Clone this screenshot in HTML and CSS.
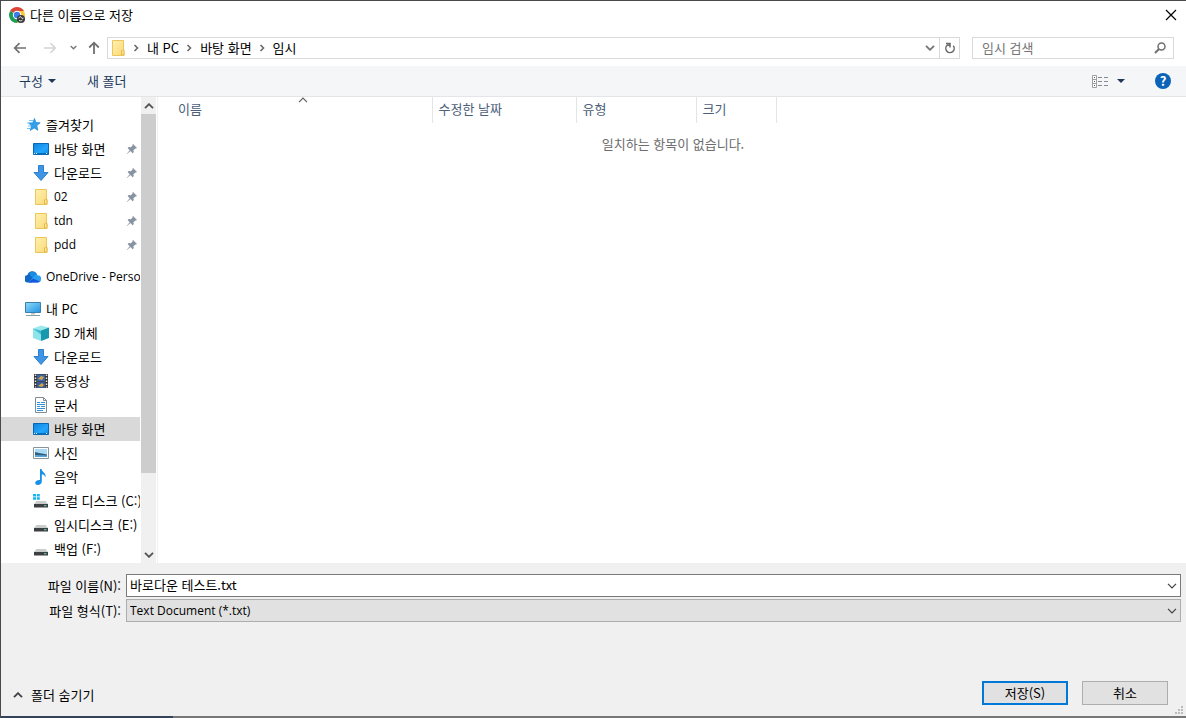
FILE: index.html
```html
<!DOCTYPE html>
<html lang="ko">
<head>
    <meta charset="UTF-8">
    <title>다른 이름으로 저장</title>
    <link rel="stylesheet" href="styles.css">
</head>
<body>
    <svg class="defs" aria-hidden="true">
        <linearGradient id="blueScreen" x1="0" y1="0" x2="1" y2="1">
            <stop offset="0" stop-color="#0b84e0"/><stop offset=".6" stop-color="#25a5fb"/><stop offset="1" stop-color="#0c8ceb"/>
        </linearGradient>
        <linearGradient id="pcScreen" x1="0" y1="0" x2="1" y2="1">
            <stop offset="0" stop-color="#8fdcfb"/><stop offset="1" stop-color="#2392e0"/>
        </linearGradient>
        <linearGradient id="folderFill" x1="0" y1="0" x2="1" y2="1">
            <stop offset="0" stop-color="#fff0b0"/><stop offset="1" stop-color="#fbd976"/>
        </linearGradient>
        <symbol id="folder" viewBox="0 0 16 16">
            <path d="M2.500.5h11v10l.5.5v4.500H2.500z" fill="url(#folderFill)" stroke="#ecc65d"/>
            <path d="M11.500 15v-4l1-1h1.500v5z" fill="#fde390" stroke="#e6b94a"/>
        </symbol>
        <symbol id="desktop" viewBox="0 0 16 16">
            <path d="M.5 2.500h15v11H.500z" fill="url(#blueScreen)" stroke="#0669b5"/>
            <path d="M1 12.500h14" stroke="#0a70bd"/>
            <path d="M1 12.500h1M3 12.500h1M13 12.500h1" stroke="#d5efff"/>
        </symbol>
        <symbol id="download" viewBox="0 0 16 16">
            <path d="M5.500.5h5v7h4.500L8 15.500 1 7.500h4.500z" fill="#3e95e3" stroke="#2d7fcb"/>
        </symbol>
        <symbol id="pin" viewBox="0 0 12 12">
            <path d="M7 1l4 4-1 .6-.7-.2-1.800 1.800.2 2-1 1L4.500 8 1 11 .8 10.700 3.700 7.200 1.600 5l1-1 2.200.2L6.600 2.600 6.400 1.700z" fill="#8793a0"/>
        </symbol>
        <symbol id="drive" viewBox="0 0 16 16">
            <path d="M3.500 8h9L15 11H1z" fill="#c9cccd"/>
            <path d="M1 11h14v3.500H1z" fill="#3b3f41"/>
            <path d="M11 12.700h2.500" stroke="#5fe39b"/>
        </symbol>
        <symbol id="chevronRight" viewBox="0 0 6 8">
            <path d="M1.500 1l3 3-3 3" fill="none" stroke="#6a6a6a" stroke-width="1.600"/>
        </symbol>
        <symbol id="chevronDown" viewBox="0 0 10 6">
            <path d="M1 .8l4 4 4-4" fill="none" stroke="currentColor" stroke-width="1.200"/>
        </symbol>
        <symbol id="chevronUp" viewBox="0 0 10 6">
            <path d="M1 5.200l4-4 4 4" fill="none" stroke="currentColor" stroke-width="1.200"/>
        </symbol>
        <symbol id="triangle" viewBox="0 0 8 4">
            <path d="M0 0h8L4 4z" fill="#1e395b"/>
        </symbol>
    </svg>

    <div class="dialog">
        <header class="titlebar">
            <svg class="icon" viewBox="0 0 16 16">
                <circle cx="8" cy="8" r="8" fill="#fff"/>
                <path d="M8 8L1.100 4A8 8 0 0 1 14.900 4z" fill="#dc4437"/>
                <path d="M8 8L1.100 4A8 8 0 0 0 8 16l3-5z" fill="#1d9c57"/>
                <path d="M8 8l3 3-3 5A8 8 0 0 0 14.900 4H8z" fill="#fcc934"/>
                <circle cx="8" cy="8" r="4.200" fill="#fff"/>
                <circle cx="8" cy="8" r="3.200" fill="#3b7ded"/>
                <circle cx="12" cy="12" r="4" fill="#3a3a3a"/>
                <path d="M9.500 11l2-1.500 1.500 2 1.500-.5M10 13.500l2 .5 1.500-1" fill="none" stroke="#ddd"/>
            </svg>
            <h1>다른 이름으로 저장</h1>
            <button class="close" aria-label="닫기">
                <svg width="12" height="12" viewBox="0 0 12 12"><path d="M1 1l10 10M11 1L1 11" stroke="#000" stroke-width="1.200"/></svg>
            </button>
        </header>

        <nav class="navbar">
            <button class="back" aria-label="뒤로">
                <svg width="14" height="12" viewBox="0 0 14 12"><path d="M13 6H2M6.500 1.200L1.700 6l4.800 4.800" fill="none" stroke="#707070" stroke-width="1.700"/></svg>
            </button>
            <button class="forward" aria-label="앞으로">
                <svg width="14" height="12" viewBox="0 0 14 12"><path d="M1 6h11M7.500 1.200L12.300 6l-4.800 4.800" fill="none" stroke="#d3d3d3" stroke-width="1.500"/></svg>
            </button>
            <button class="recent" aria-label="최근 위치">
                <svg width="7" height="5" viewBox="0 0 10 6"><path d="M1 .8l4 4 4-4" fill="none" stroke="#777" stroke-width="2"/></svg>
            </button>
            <button class="up" aria-label="위로">
                <svg width="12" height="14" viewBox="0 0 12 14"><path d="M6 13V2M1.200 6.500L6 1.700l4.800 4.800" fill="none" stroke="#707070" stroke-width="1.800"/></svg>
            </button>
            <div class="address">
                <svg class="icon"><use href="#folder"/></svg>
                <svg class="sep"><use href="#chevronRight"/></svg>
                <button>내 PC</button>
                <svg class="sep"><use href="#chevronRight"/></svg>
                <button>바탕 화면</button>
                <svg class="sep"><use href="#chevronRight"/></svg>
                <button>임시</button>
                <button class="history" aria-label="이전 위치">
                    <svg width="10" height="6" viewBox="0 0 10 6"><path d="M1 .8l4 4 4-4" fill="none" stroke="#747474" stroke-width="1.800"/></svg>
                </button>
                <button class="refresh" aria-label="새로 고침">
                    <svg width="12" height="12" viewBox="0 0 12 12"><path d="M9.300 3.800A4.200 4.200 0 1 1 3.200 3.300L5.500 3M2 1.500h4V5.500" fill="none" stroke="#686868" stroke-width="1.500"/></svg>
                </button>
            </div>
            <div class="search">
                <input type="text" placeholder="임시 검색" aria-label="임시 검색">
                <svg width="12" height="12" viewBox="0 0 12 12"><circle cx="7.500" cy="4.500" r="3.500" fill="none" stroke="#707070" stroke-width="1.500"/><path d="M5 7L1 11" stroke="#707070" stroke-width="2"/></svg>
            </div>
        </nav>

        <div class="toolbar">
            <button class="organize">구성 <svg width="8" height="4"><use href="#triangle"/></svg></button>
            <button>새 폴더</button>
            <button class="view" aria-label="보기">
                <svg width="16" height="13" viewBox="0 0 16 13"><path d="M.5.5h4v12h-4zM.5 4.500h4M.5 8.500h4" fill="#fff" stroke="#9aa0a6"/><path d="M2 2.500h1M2 6.500h1M2 10.500h1" stroke="#555"/><path d="M6 2.500h4M12 2.500h4M6 6.500h4M12 6.500h4M6 10.500h4M12 10.500h4" stroke="#858b91"/></svg>
                <svg width="8" height="4"><use href="#triangle"/></svg>
            </button>
            <button class="help" aria-label="도움말">?</button>
        </div>

        <main>
            <ul class="tree">
                <li><a href="#"><svg class="icon" viewBox="0 0 16 16"><path d="M9.500 1.500l1.400 4 4.300.3-3.400 2.800 1 4.700-3.600-2.400-4 2.600 1.400-4.600-3-2.800 4.200-.3z" fill="#31a1ee" stroke="#1c84d0" stroke-width=".7"/><path d="M4 3.500h4M2 6h3M3 9h3M2 11.500h3" stroke="#72c3f5"/></svg>즐겨찾기</a></li>
                <li><a class="sub" href="#"><svg class="icon"><use href="#desktop"/></svg>바탕 화면<svg class="pin"><use href="#pin"/></svg></a></li>
                <li><a class="sub" href="#"><svg class="icon"><use href="#download"/></svg>다운로드<svg class="pin"><use href="#pin"/></svg></a></li>
                <li><a class="sub latin" href="#"><svg class="icon"><use href="#folder"/></svg>02<svg class="pin"><use href="#pin"/></svg></a></li>
                <li><a class="sub latin" href="#"><svg class="icon"><use href="#folder"/></svg>tdn<svg class="pin"><use href="#pin"/></svg></a></li>
                <li><a class="sub latin" href="#"><svg class="icon"><use href="#folder"/></svg>pdd<svg class="pin"><use href="#pin"/></svg></a></li>
                <li class="group"><a class="latin" href="#"><svg class="icon" viewBox="0 0 16 16"><path d="M3.500 13.500A3.500 3.500 0 0 1 2.500 6a5 5 0 0 1 9-1.500L7 13.500z" fill="#1167c4"/><path d="M4 4.500a5 5 0 0 1 8.500 1.700L8 10z" fill="#178ce0"/><path d="M3.500 13.500L9 7.200a4 4 0 0 1 3.500-1 3.600 3.600 0 0 1 0 7.300z" fill="#2a9df4"/><path d="M3.500 13.500L8 9.500l6.800 3a4 4 0 0 1-2.300 1z" fill="#1a56db"/></svg>OneDrive - Person</a></li>
                <li class="group"><a href="#"><svg class="icon" viewBox="0 0 16 16"><path d="M.5 1.500h15v10H.500z" fill="url(#pcScreen)" stroke="#3a7fae"/><path d="M6 12h4v1.500H6z" fill="#b8c4cb"/><path d="M1 14.500h14" stroke="#8b9ba5"/></svg>내 PC</a></li>
                <li><a class="sub" href="#"><svg class="icon" viewBox="0 0 16 16"><path d="M0 3.500L8 .5l8 2-8 3z" fill="#9be8ef"/><path d="M0 3.500l8 2V16L0 13z" fill="#8fe3ea"/><path d="M8 5.500l8-3V13l-8 3z" fill="#1798ad"/><path d="M0 3.500l8 2v4z" fill="#3fbccb"/></svg>3D 개체</a></li>
                <li><a class="sub" href="#"><svg class="icon"><use href="#download"/></svg>다운로드</a></li>
                <li><a class="sub" href="#"><svg class="icon" viewBox="0 0 16 16"><path d="M1 1h14v14H1z" fill="#38332f"/><path d="M4 1.500h8V8H4z" fill="#3a67a4"/><path d="M4 8.500h8V15H4z" fill="#385c9b"/><path d="M5 6l3-3 3 1-2 3zM5 13l4-3 2 2-2 2z" fill="#d2a648"/><path d="M2.500 1.500v13M13.500 1.500v13" stroke="#e8e8e8" stroke-width="1.500" stroke-dasharray="1.500 1.500"/></svg>동영상</a></li>
                <li><a class="sub" href="#"><svg class="icon" viewBox="0 0 16 16"><path d="M2.500.5h8l3 3v12h-11z" fill="#fff" stroke="#7d8c96"/><path d="M10.500.5v3h3" fill="none" stroke="#7d8c96"/><path d="M4 5.500h3M8 5.500h4M4 7.500h8M4 9.500h3M8 9.500h4M4 11.500h8M4 13.500h6" stroke="#2f92d8"/></svg>문서</a></li>
                <li><a class="sub selected" href="#"><svg class="icon"><use href="#desktop"/></svg>바탕 화면</a></li>
                <li><a class="sub" href="#"><svg class="icon" viewBox="0 0 16 16"><path d="M.5 2.500h15v11H.500z" fill="#fff" stroke="#8b949b"/><path d="M2 4h12v8H2z" fill="#a9daf5"/><path d="M2 7l4 1 3 .5 5 1V12H2z" fill="#315f7f"/><path d="M2 10l12 .5V12H2z" fill="#5aa7d6"/></svg>사진</a></li>
                <li><a class="sub" href="#"><svg class="icon" viewBox="0 0 16 16"><path d="M7 0h1.500c.3 3 5 4 4 8.500-.5-2-1.800-3-3.700-3.300V12.500c0 2-2 3.500-4 3.500S2 14.800 2.300 13.300 4.800 10.600 7 11z" fill="#168fe6"/></svg>음악</a></li>
                <li><a class="sub" href="#"><svg class="icon" viewBox="0 0 16 16"><use href="#drive"/><path d="M0 1h3v2.500H0zM3.800 1h3v2.500h-3zM0 4.300h3v2.500H0zM3.800 4.300h3v2.500h-3z" fill="#18b4f0"/></svg>로컬 디스크 (C:)</a></li>
                <li><a class="sub" href="#"><svg class="icon"><use href="#drive"/></svg>임시디스크 (E:)</a></li>
                <li><a class="sub" href="#"><svg class="icon"><use href="#drive"/></svg>백업 (F:)</a></li>
            </ul>
            <div class="scrollbar">
                <button aria-label="위로 스크롤"><svg width="10" height="6" viewBox="0 0 10 6"><path d="M1 5.200l4-4 4 4" fill="none" stroke="#505050" stroke-width="1.800"/></svg></button>
                <div class="track"><div class="thumb"></div></div>
                <button aria-label="아래로 스크롤"><svg width="10" height="6" viewBox="0 0 10 6"><path d="M1 .8l4 4 4-4" fill="none" stroke="#505050" stroke-width="1.800"/></svg></button>
            </div>
            <div class="files">
                <table>
                    <thead>
                        <tr>
                            <th class="name">이름<svg class="sort"><use href="#chevronUp"/></svg></th>
                            <th class="date">수정한 날짜</th>
                            <th class="type">유형</th>
                            <th class="size">크기</th>
                        </tr>
                    </thead>
                </table>
                <p class="empty">일치하는 항목이 없습니다.</p>
            </div>
        </main>

        <footer>
            <div class="fields">
                <label for="fileName">파일 이름(N):</label>
                <div class="combo">
                    <input type="text" id="fileName" value="바로다운 테스트.txt">
                    <svg class="arrow"><use href="#chevronDown"/></svg>
                </div>
                <label for="fileType">파일 형식(T):</label>
                <div class="combo">
                    <select id="fileType" class="latin"><option>Text Document (*.txt)</option></select>
                    <svg class="arrow"><use href="#chevronDown"/></svg>
                </div>
            </div>
            <div class="actions">
                <button class="hide-folders"><svg width="10" height="6" viewBox="0 0 10 6"><path d="M1 5.200l4-4 4 4" fill="none" stroke="#404040" stroke-width="1.800"/></svg>폴더 숨기기</button>
                <button class="push default">저장(S)</button>
                <button class="push">취소</button>
            </div>
            <svg class="grip" viewBox="0 0 8 8"><path d="M6 0h2v2H6zM3 3h2v2H3zM6 3h2v2H6zM0 6h2v2H0zM3 6h2v2H3zM6 6h2v2H6z" fill="#bcbcbc"/></svg>
        </footer>
        <div class="edge"></div>
    </div>
</body>
</html>
```
FILE: styles.css
```css
* {
    box-sizing: border-box;
}
body {
    margin: 0;
    font-family: "Noto Sans CJK KR", sans-serif;
    font-size: 13px;
    line-height: 16px;
    color: #000;
}
button, input, select {
    font: inherit;
    color: inherit;
    margin: 0;
    padding: 0;
    border: none;
    background: none;
    border-radius: 0;
    outline: none;
}
button {
    display: flex;
    align-items: center;
    justify-content: center;
}
svg {
    flex: none;
}
.defs {
    position: absolute;
    width: 0;
    height: 0;
}
.icon {
    width: 16px;
    height: 16px;
}
.latin {
    font-family: "Open Sans", "Noto Sans", sans-serif;
    font-size: 12px;
}
.dialog {
    display: flex;
    flex-direction: column;
    height: 100vh;
    border-top: 1px solid #4b494c;
    border-left: 1px solid #4b494c;
    background: #fff;
}

/* title bar */
.titlebar {
    display: flex;
    align-items: center;
    gap: 5px;
    height: 28px;
    padding: 0 9px 0 8px;
}
.titlebar h1 {
    margin: 0;
    font-size: 13px;
    font-weight: normal;
}
.close {
    margin-left: auto;
}

/* navigation */
.navbar {
    display: flex;
    align-items: center;
    height: 37px;
    padding: 0 12px;
}
.forward {
    margin-left: 16px;
}
.recent {
    margin-left: 13px;
}
.up {
    margin-left: 11px;
}
.address {
    display: flex;
    align-items: center;
    flex: 1;
    height: 22px;
    margin-left: 7px;
    padding-left: 2px;
    border: 1px solid #d9d9d9;
}
.sep {
    width: 6px;
    height: 8px;
    margin: 0 8px 0 7px;
}
.history {
    margin-left: auto;
    width: 18px;
    height: 20px;
}
.refresh {
    width: 20px;
    height: 20px;
    border-left: 1px solid #d9d9d9;
}
.search {
    display: flex;
    align-items: center;
    width: 202px;
    height: 22px;
    margin-left: 12px;
    padding: 0 7px 0 9px;
    border: 1px solid #d9d9d9;
}
.search input {
    flex: 1;
    min-width: 0;
}
.search input::placeholder {
    color: #757575;
}

/* toolbar */
.toolbar {
    display: flex;
    align-items: center;
    height: 31px;
    padding: 0 15px 0 18px;
    background: #f4f6f8;
    border-bottom: 1px solid #e3e5e8;
    color: #1e395b;
}
.organize {
    gap: 5px;
    margin-right: 31px;
}
.view {
    gap: 9px;
    margin-left: auto;
}
.help {
    width: 16px;
    height: 16px;
    margin-left: 30px;
    border-radius: 50%;
    background: #0a63b8;
    color: #fff;
    font-size: 13px;
    font-weight: bold;
}

/* folder tree and file list */
main {
    display: flex;
    flex: 1;
    min-height: 0;
}
.tree {
    width: 139px;
    margin: 0;
    padding: 16px 0 0;
    overflow: hidden;
    list-style: none;
}
.tree a {
    display: flex;
    align-items: center;
    gap: 5px;
    height: 24px;
    padding-left: 24px;
    color: #000;
    text-decoration: none;
    white-space: nowrap;
}
.tree .sub {
    padding-left: 32px;
}
.tree .group {
    margin-top: 8px;
}
.tree .selected {
    background: #d9d9d9;
}
.pin {
    width: 12px;
    height: 12px;
    margin: 0 2px 0 auto;
}
.scrollbar {
    display: flex;
    flex-direction: column;
    width: 15px;
    margin-left: 1px;
    background: #f0f0f0;
}
.scrollbar button {
    height: 17px;
}
.track {
    flex: 1;
}
.thumb {
    height: 83%;
    background: #cdcdcd;
}
.files {
    flex: 1;
    margin-left: 1px;
    padding-left: 2px;
    border-left: 1px solid #f0f0f0;
}
table {
    border-collapse: collapse;
    table-layout: fixed;
    width: 616px;
}
th {
    position: relative;
    height: 26px;
    padding: 0 6px 2px;
    border-right: 1px solid #e2e4e6;
    color: #4c607a;
    font-weight: normal;
    text-align: left;
}
.name {
    width: 272px;
    padding-left: 18px;
}
.date {
    width: 144px;
}
.type {
    width: 120px;
}
.size {
    width: 80px;
}
.sort {
    position: absolute;
    top: 0;
    left: 138px;
    width: 10px;
    height: 6px;
    color: #606060;
}
.empty {
    margin: 13px 0;
    color: #6d6d6d;
    text-align: center;
}

/* file name, type and buttons */
footer {
    position: relative;
    padding: 11px 5px 11px 12px;
    background: #f0f0f0;
}
.fields {
    display: grid;
    grid-template-columns: 108px 1fr;
    align-items: center;
    gap: 2px 5px;
}
.fields label {
    text-align: right;
}
.combo {
    position: relative;
}
.combo input, .combo select {
    display: block;
    width: 100%;
    height: 23px;
    padding: 0 20px 2px 3px;
    border: 1px solid #7a7a7a;
    background: #fff;
    appearance: none;
}
.combo select {
    padding-bottom: 0;
    border-color: #adadad;
    background: #e1e1e1;
}
.arrow {
    position: absolute;
    top: 9px;
    right: 4px;
    width: 10px;
    height: 6px;
    color: #404040;
    pointer-events: none;
}
.actions {
    display: flex;
    align-items: center;
    gap: 14px;
    margin-top: 59px;
    padding-right: 13px;
}
.hide-folders {
    gap: 8px;
    margin-right: auto;
    padding-top: 3px;
}
.push {
    width: 86px;
    height: 24px;
    padding-bottom: 1px;
    border: 1px solid #adadad;
    background: #e1e1e1;
}
.push.default {
    border: 2px solid #0078d7;
}
.grip {
    position: absolute;
    right: 3px;
    bottom: 2px;
    width: 8px;
    height: 8px;
}
.edge {
    height: 2px;
    background: linear-gradient(to right, #35435a 172px, #777 172px);
}
```
